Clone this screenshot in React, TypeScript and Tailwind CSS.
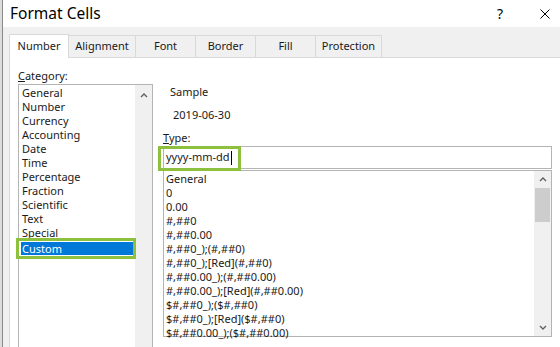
const categories = [
  "General",
  "Number",
  "Currency",
  "Accounting",
  "Date",
  "Time",
  "Percentage",
  "Fraction",
  "Scientific",
  "Text",
  "Special",
];

const types = [
  "General",
  "0",
  "0.00",
  "#,##0",
  "#,##0.00",
  "#,##0_);(#,##0)",
  "#,##0_);[Red](#,##0)",
  "#,##0.00_);(#,##0.00)",
  "#,##0.00_);[Red](#,##0.00)",
  "$#,##0_);($#,##0)",
  "$#,##0_);[Red]($#,##0)",
  "$#,##0.00_);($#,##0.00)",
];

const tabs = [
  { label: "Number", width: "w-[60px]" },
  { label: "Alignment", width: "w-[67px]" },
  { label: "Font", width: "w-[60px]" },
  { label: "Border", width: "w-[60px]" },
  { label: "Fill", width: "w-[60px]" },
  { label: "Protection", width: "w-[66px]" },
];

function Chevron({ down = false }: { down?: boolean }) {
  return (
    <svg viewBox="0 0 8 5" className="h-[5px] w-[8px]" aria-hidden="true">
      <polyline
        points={down ? "1,1 4,4 7,1" : "1,4 4,1 7,4"}
        fill="none"
        stroke="#606060"
        strokeWidth="1.4"
      />
    </svg>
  );
}

export default function App() {
  return (
    <div className="flex h-[347px] w-[560px] overflow-hidden bg-[#f0f0f0] font-['Noto_Sans',sans-serif] text-[11px] text-[#1a1a1a]">
      <div className="w-[2px] shrink-0 bg-[#dcdcdc]" />
      <div className="w-px shrink-0 bg-[#8a8a8a]" />

      <div className="flex min-h-0 flex-1 flex-col">
        {/* title bar */}
        <div className="flex h-[27px] shrink-0 items-center bg-white pl-[7px]">
          <span className="text-[15.5px] leading-none text-black">Format Cells</span>
          <span className="ml-auto mr-[37px] text-[14px] leading-none text-black">?</span>
          <svg viewBox="0 0 10 10" className="mr-[10px] h-[10px] w-[10px]" aria-hidden="true">
            <path d="M0.5 0.5 L9.5 9.5 M9.5 0.5 L0.5 9.5" stroke="#000" strokeWidth="1" />
          </svg>
        </div>

        <div className="flex min-h-0 flex-1 flex-col pl-[6px] pt-[7px]">
          {/* tabs */}
          <div className="relative z-10 flex h-[23px] shrink-0 items-end">
            {tabs.map((tab, i) =>
              i === 0 ? (
                <div
                  key={tab.label}
                  className={`${tab.width} -mb-px flex h-[24px] items-center justify-center border border-b-0 border-[#d9d9d9] bg-white`}
                >
                  {tab.label}
                </div>
              ) : (
                <div
                  key={tab.label}
                  className={`${tab.width} flex h-[22px] items-center justify-center border border-b-0 border-l-0 border-[#d9d9d9] bg-[#f0f0f0]`}
                >
                  {tab.label}
                </div>
              ),
            )}
          </div>

          {/* panel */}
          <div className="flex min-h-0 flex-1 border-l border-t border-[#d9d9d9] bg-white">
            {/* category column */}
            <div className="flex shrink-0 flex-col pl-[8px] pt-[10px]">
              <div className="leading-[15px]">
                <span className="underline">C</span>ategory:
              </div>
              <div className="mt-px flex h-[280px] w-[135px] shrink-0 border border-[#b4b4b4] bg-white">
                <div className="flex flex-1 flex-col pt-px">
                  {categories.map((c) => (
                    <div key={c} className="h-[14px] pl-[3px] leading-[14px]">
                      {c}
                    </div>
                  ))}
                  <div className="relative mt-[2px] ml-[2px] mr-[2px]">
                    <div className="h-[13px] bg-[#0078d7] pl-px leading-[13px] text-white">
                      Custom
                    </div>
                    <div className="h-px bg-white" />
                    <div className="pointer-events-none absolute -bottom-[3px] -left-[5px] -right-[3px] -top-[4px] border-[3px] border-[#8dc03d]" />
                  </div>
                </div>
                <div className="flex w-[17px] flex-col items-center bg-[#f0f0f0] pt-[8px]">
                  <Chevron />
                </div>
              </div>
            </div>

            {/* right column */}
            <div className="ml-[10px] flex flex-1 flex-col pt-[26px]">
              <div className="pl-[7px] leading-[15px]">Sample</div>
              <div className="mt-[8px] pl-[10px] leading-[15px]">2019-06-30</div>
              <div className="mt-[8px] leading-[15px]">
                <span className="underline">T</span>ype:
              </div>

              <div className="relative mt-px mr-[8px] flex h-[23px] shrink-0 items-center border border-[#b4b4b4] bg-white pl-[2px]">
                <span>yyyy-mm-dd</span>
                <span className="ml-px h-[14px] w-px bg-black" />
                <div className="pointer-events-none absolute -left-[6px] -top-px h-[25px] w-[83px] border-[3px] border-[#8dc03d]" />
              </div>

              <div className="mt-px mr-[8px] flex h-[167px] shrink-0 border border-[#b4b4b4] bg-white">
                <div className="flex flex-1 flex-col pt-px">
                  {types.map((t) => (
                    <div key={t} className="h-[14px] pl-[2px] leading-[14px]">
                      {t}
                    </div>
                  ))}
                </div>
                <div className="flex w-[17px] flex-col items-center bg-[#f0f0f0]">
                  <div className="flex h-[17px] items-center justify-center">
                    <Chevron />
                  </div>
                  <div className="h-[34px] w-[15px] bg-[#cdcdcd]" />
                  <div className="mt-auto flex h-[17px] items-center justify-center">
                    <Chevron down />
                  </div>
                </div>
              </div>
            </div>
          </div>
        </div>
      </div>
    </div>
  );
}
